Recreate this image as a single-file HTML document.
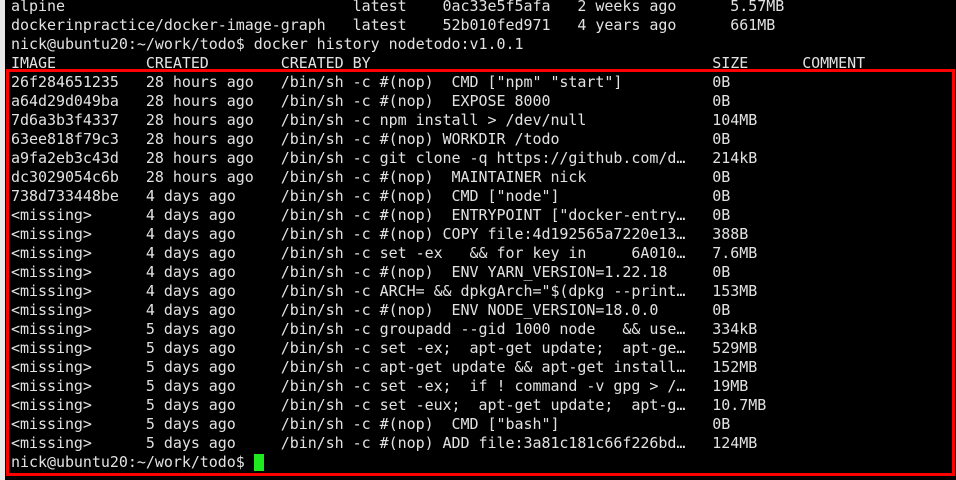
<!DOCTYPE html>
<html><head><style>
html,body{margin:0;padding:0;width:956px;height:480px;overflow:hidden;background:#000}
.strip{position:absolute;left:0;top:0;width:5px;height:480px;background:#e8e8e8}
pre{position:absolute;left:11px;top:-3px;margin:0;font-family:"DejaVu Sans Mono","Liberation Mono",monospace;font-size:15px;line-height:19px;color:#e2e2e2;white-space:pre;letter-spacing:-0.04px}
.box{position:absolute;left:6px;top:69px;width:943px;height:401px;border:3px solid #f00}
.cur{display:inline-block;width:10px;height:17px;background:#1ee81e;vertical-align:-4px}
</style></head><body>
<div class="strip"></div>
<pre>alpine                                latest    0ac33e5f5afa   2 weeks ago      5.57MB
dockerinpractice/docker-image-graph   latest    52b010fed971   4 years ago      661MB
nick@ubuntu20:~/work/todo$ docker history nodetodo:v1.0.1
IMAGE          CREATED        CREATED BY                                      SIZE      COMMENT
26f284651235   28 hours ago   /bin/sh -c #(nop)  CMD ["npm" "start"]          0B
a64d29d049ba   28 hours ago   /bin/sh -c #(nop)  EXPOSE 8000                  0B
7d6a3b3f4337   28 hours ago   /bin/sh -c npm install &gt; /dev/null              104MB
63ee818f79c3   28 hours ago   /bin/sh -c #(nop) WORKDIR /todo                 0B
a9fa2eb3c43d   28 hours ago   /bin/sh -c git clone -q https://github.com/d…   214kB
dc3029054c6b   28 hours ago   /bin/sh -c #(nop)  MAINTAINER nick              0B
738d733448be   4 days ago     /bin/sh -c #(nop)  CMD ["node"]                 0B
&lt;missing&gt;      4 days ago     /bin/sh -c #(nop)  ENTRYPOINT ["docker-entry…   0B
&lt;missing&gt;      4 days ago     /bin/sh -c #(nop) COPY file:4d192565a7220e13…   388B
&lt;missing&gt;      4 days ago     /bin/sh -c set -ex   &amp;&amp; for key in     6A010…   7.6MB
&lt;missing&gt;      4 days ago     /bin/sh -c #(nop)  ENV YARN_VERSION=1.22.18     0B
&lt;missing&gt;      4 days ago     /bin/sh -c ARCH= &amp;&amp; dpkgArch="$(dpkg --print…   153MB
&lt;missing&gt;      4 days ago     /bin/sh -c #(nop)  ENV NODE_VERSION=18.0.0      0B
&lt;missing&gt;      5 days ago     /bin/sh -c groupadd --gid 1000 node   &amp;&amp; use…   334kB
&lt;missing&gt;      5 days ago     /bin/sh -c set -ex;  apt-get update;  apt-ge…   529MB
&lt;missing&gt;      5 days ago     /bin/sh -c apt-get update &amp;&amp; apt-get install…   152MB
&lt;missing&gt;      5 days ago     /bin/sh -c set -ex;  if ! command -v gpg &gt; /…   19MB
&lt;missing&gt;      5 days ago     /bin/sh -c set -eux;  apt-get update;  apt-g…   10.7MB
&lt;missing&gt;      5 days ago     /bin/sh -c #(nop)  CMD ["bash"]                 0B
&lt;missing&gt;      5 days ago     /bin/sh -c #(nop) ADD file:3a81c181c66f226bd…   124MB
nick@ubuntu20:~/work/todo$ <span class="cur"></span></pre>
<div class="box"></div>
</body></html>
